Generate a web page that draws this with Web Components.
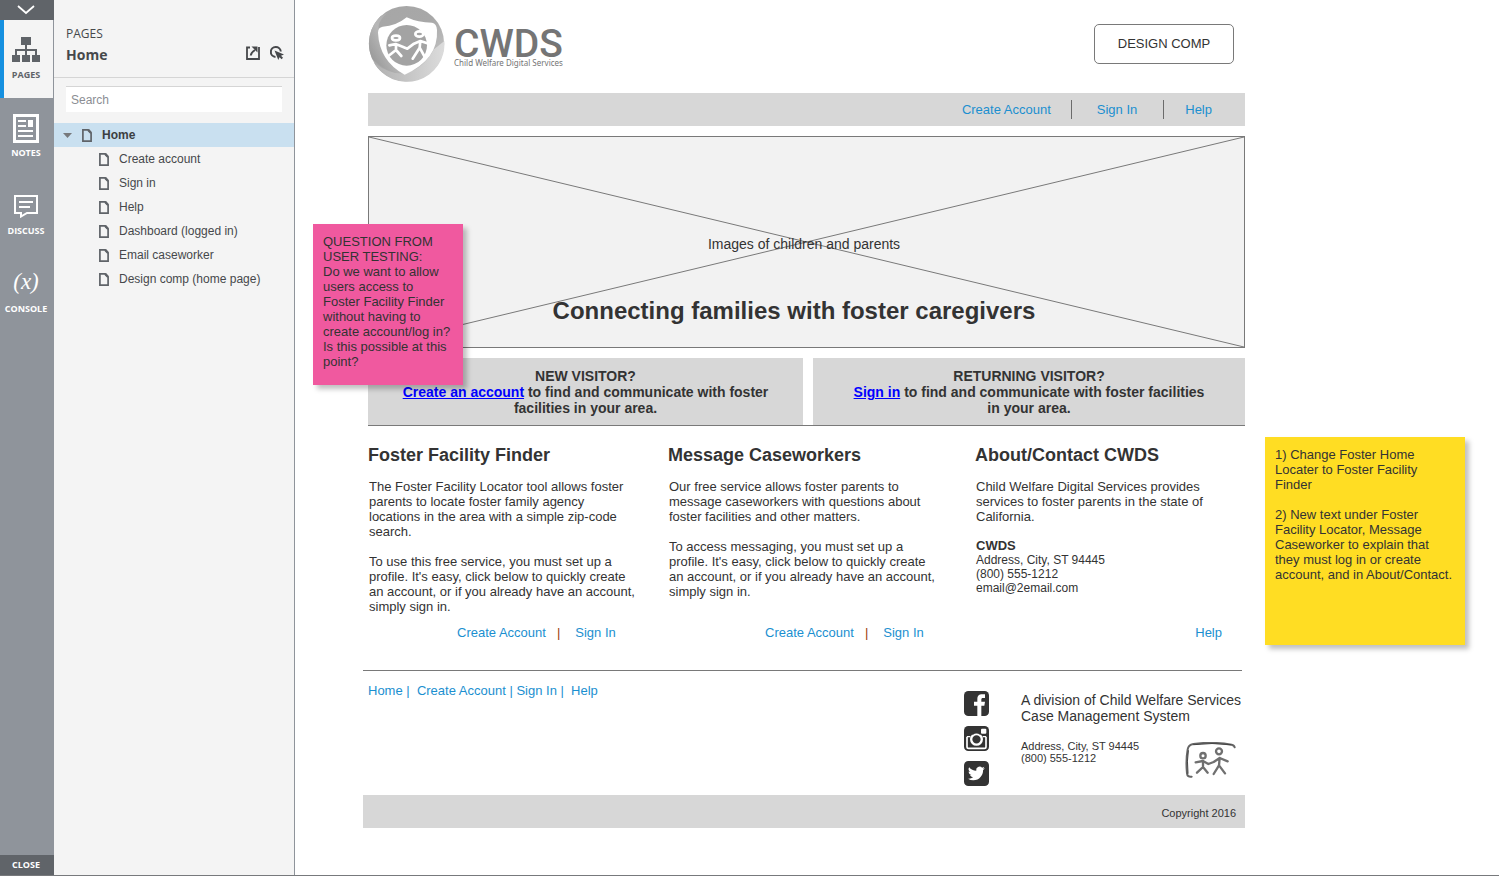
<!DOCTYPE html>
<html lang="en">
<head>
<meta charset="utf-8">
<title>Home</title>
<style>
  html, body { margin: 0; }
  body { font: 13px/15px "Liberation Sans", Arial, sans-serif; color: #333; background: #fff; }
</style>
</head>
<body>
<player-shell>
  <side-rail slot="rail"></side-rail>
  <pages-panel slot="panel"></pages-panel>
  <home-page></home-page>
</player-shell>

<script>
const define = (name, css, html) => {
  const tpl = document.createElement('template');
  tpl.innerHTML = `<style>*{box-sizing:border-box}${css}</style>${html}`;
  customElements.define(name, class extends HTMLElement {
    constructor() {
      super();
      this.attachShadow({ mode: 'open' }).append(tpl.content.cloneNode(true));
    }
  });
};

/* ---------- player frame ---------- */
define('player-shell', `
  :host { display: flex; box-sizing: border-box; min-height: 100vh; border-bottom: 1px solid #77797c; }
  .rail, .panel { display: flex; flex: none; }
  main { flex: 1; min-width: 0; }
`, `
  <div class="rail"><slot name="rail"></slot></div>
  <div class="panel"><slot name="panel"></slot></div>
  <main><slot></slot></main>
`);

define('rail-tab', `
  :host { display: block; color: #fff; }
  :host([active]) { color: #5f6368; }
  button { display: flex; flex-direction: column; align-items: center; gap: 4px; width: 100%; height: 78px;
    padding: 15px 2px 0 0; border: 0; background: none; color: inherit; font: 700 9px/12px "Open Sans", sans-serif; }
  :host([active]) button { width: 53px; padding: 14px 5px 0 0; border-left: 4px solid #1590e0; background: #f4f4f4; gap: 5px; }
  .icon { display: flex; height: 30px; align-items: center; justify-content: center; }
`, `
  <button type="button"><span class="icon"><slot name="icon"></slot></span><span><slot></slot></span></button>
`);

define('side-rail', `
  :host { display: flex; flex-direction: column; width: 54px; background: #8f949b; }
  .edge { display: flex; align-items: center; justify-content: center; width: 100%; height: 20px; padding: 0 2px 0 0;
    border: 0; background: #606469; color: #fff; font: 700 9px/12px "Open Sans", sans-serif; }
  nav { flex: 1; }
  svg { display: block; }
  .fx { padding-bottom: 4px; font: italic 23px/26px "Liberation Serif", serif; }
`, `
  <button class="edge" type="button" aria-label="Collapse">
    <svg width="18" height="10" viewBox="0 0 18 10" fill="none" stroke="#fff" stroke-width="1.8"><path d="M1 1l8 7 8-7"/></svg>
  </button>
  <nav>
    <rail-tab active>
      <svg slot="icon" width="28" height="25" viewBox="0 0 28 25" fill="#5f6368">
        <path d="M9 0h10v8H9zM0 18h8v7H0zM10 18h8v7h-8zM20 18h8v7h-8z"/>
        <path d="M14 8v10M4 18v-5h20v5" fill="none" stroke="#5f6368" stroke-width="2"/>
      </svg>PAGES</rail-tab>
    <rail-tab>
      <svg slot="icon" width="26" height="29" viewBox="0 0 26 29">
        <rect x="1.500" y="1.500" width="23" height="26" fill="none" stroke="#fff" stroke-width="3"/>
        <path d="M5 7h8M5 12h8M5 17h15M5 22h15" stroke="#fff" stroke-width="2"/>
        <path d="M15 6h5v7h-5z" fill="#fff"/>
      </svg>NOTES</rail-tab>
    <rail-tab>
      <svg slot="icon" width="24" height="23" viewBox="0 0 24 23" fill="none" stroke="#fff" stroke-width="2">
        <path d="M1 1h22v17H13l-6 3.500V18H1z"/><path d="M5 7h14M5 12h11"/>
      </svg>DISCUSS</rail-tab>
    <rail-tab><span slot="icon" class="fx">(x)</span>CONSOLE</rail-tab>
  </nav>
  <button class="edge" type="button">CLOSE</button>
`);

define('page-item', `
  :host { display: block; }
  a { display: flex; align-items: center; height: 24px; padding: 1px 0 0 45px; color: #46484b; font-size: 12px; text-decoration: none; }
  .page { margin-right: 10px; }
  .arrow { display: none; margin-right: 10px; }
  :host([selected]) a { padding-left: 9px; background: #c9e0f0; color: #3c3f42; font-weight: 700; }
  :host([selected]) .arrow { display: block; }
`, `
  <a href="#">
    <svg class="arrow" width="9" height="5" viewBox="0 0 9 5"><path d="M0 0h9L4.500 5z" fill="#77797c"/></svg>
    <svg class="page" width="10" height="13" viewBox="0 0 10 13" fill="none" stroke="#5f6368" stroke-width="1.700"><path d="M.9.9h5.300L9.100 4v8.100H.9z"/><path d="M6.200 .9L9.100 4" stroke-width="2.400"/></svg>
    <slot></slot>
  </a>
`);

define('pages-panel', `
  :host { display: block; box-sizing: border-box; width: 241px; background: #f4f4f4; border-right: 1px solid #8f949b; color: #46484b; }
  header { display: flex; justify-content: space-between; align-items: flex-end; height: 78px; padding: 0 10px 11px 12px;
    border-bottom: 1px solid #d5d5d5; font-family: "Open Sans", sans-serif; }
  p, h1 { margin: 0; }
  p { font-size: 12px; line-height: 20px; }
  h1 { font-size: 14px; line-height: 22px; font-weight: 700; }
  .tools { display: flex; gap: 10px; padding-bottom: 6px; }
  .tools button { display: block; padding: 0; border: 0; background: none; }
  svg { display: block; }
  .search { padding: 8px 12px 11px; }
  input { display: block; width: 100%; height: 26px; padding: 0 5px; border: 0; border-top: 1px solid #d5d5d5; background: #fff;
    font: 12px "Liberation Sans", sans-serif; color: #333; }
  input::placeholder { color: #8b8e93; }
`, `
  <header>
    <div><p>PAGES</p><h1>Home</h1></div>
    <div class="tools">
      <button type="button" aria-label="Open without sidebar">
        <svg width="14" height="14" viewBox="0 0 14 14" fill="none" stroke="#46484b" stroke-width="2"><path d="M4 1.500H1V13h12V1" stroke-width="1.800"/><path d="M4.800 9.500C5 7 6.500 5.500 9 4"/><path d="M5.500 .5H11.500V6.500z" fill="#46484b" stroke="none"/></svg>
      </button>
      <button type="button" aria-label="Highlight interactive elements">
        <svg width="14" height="14" viewBox="0 0 14 14"><path d="M5.500 11A5 5 0 1 1 10.800 5.500" fill="none" stroke="#46484b" stroke-width="2"/><path d="M4.500 4.500L14 8.500l-3 1.200 2 2.100-1.400 1.400-2.100-2-1.200 2.800z" fill="#46484b"/></svg>
      </button>
    </div>
  </header>
  <div class="search"><input type="search" placeholder="Search" aria-label="Search pages"></div>
  <nav>
    <page-item selected>Home</page-item>
    <page-item>Create account</page-item>
    <page-item>Sign in</page-item>
    <page-item>Help</page-item>
    <page-item>Dashboard (logged in)</page-item>
    <page-item>Email caseworker</page-item>
    <page-item>Design comp (home page)</page-item>
  </nav>
`);

/* ---------- prototype page ---------- */
define('cwds-logo', `
  :host { display: flex; gap: 9px; }
  svg { display: block; flex: none; }
  .words { padding-top: 21px; color: #757575; }
  strong, small { display: block; white-space: nowrap; }
  strong { font: 500 39px/34px Roboto, sans-serif; }
  small { margin-top: -2px; font: 8px/8px "Noto Sans", sans-serif; }
`, `
  <svg width="77" height="77" viewBox="0 0 231 231" role="img" aria-label="CWDS emblem">
    <defs>
      <linearGradient id="a" x1="0" y1="1" x2="1" y2="0"><stop offset="0" stop-color="#8c8c8c"/><stop offset=".5" stop-color="#b8b8b8"/><stop offset="1" stop-color="#a0a0a0"/></linearGradient>
      <linearGradient id="b" x1="0" y1="0" x2="1" y2="0"><stop offset="0" stop-color="#b0b0b0"/><stop offset="1" stop-color="#dcdcdc"/></linearGradient>
      <linearGradient id="c" x1="0" y1="0" x2="1" y2="1"><stop offset="0" stop-color="#a6a6a6"/><stop offset=".5" stop-color="#a8a8a8"/><stop offset="1" stop-color="#cfcfcf"/></linearGradient>
    </defs>
    <circle cx="115.500" cy="113" r="113" fill="url(#c)"/>
    <path d="M38 30A113 113 0 0 0 14 160Q60 205 106 204L34 110 32 60Q34 40 60 20Z" fill="url(#a)"/>
    <path d="M18 170Q70 208 112 202 165 190 198 130L229 105A113 113 0 0 1 18 170Z" fill="url(#b)"/>
    <path d="M116 34Q150 50 192 50 206 52 207 72 212 160 110 206 34 165 30 80 30 64 44 62 85 60 116 34Z" fill="#fff"/>
    <circle cx="116" cy="118" r="61" fill="#a3a3a3"/>
    <g fill="none" stroke="#fff" stroke-width="8" stroke-linejoin="round" stroke-linecap="round">
      <ellipse cx="84" cy="96" rx="12" ry="7"/><ellipse cx="154" cy="84" rx="12" ry="8"/>
      <path d="M64 118L83 114 100 121 118 128 138 113 157 105 178 112M84 114L84 132 64 148M84 132L100 150M157 105L155 125 134 158M155 125L172 156"/>
    </g>
  </svg>
  <div class="words"><strong>CWDS</strong><small>Child Welfare Digital Services</small></div>
`);

define('top-nav', `
  :host { display: block; background: #d7d7d7; }
  ul { display: flex; justify-content: flex-end; margin: 0; padding: 7px 33px 7px 0; list-style: none; line-height: 19px; }
  li + li { margin-left: 20px; padding-left: 25px; border-left: 1px solid #6b6b6b; }
  li:last-child { margin-left: 26px; padding-left: 21px; }
  a { color: #1b8fd0; text-decoration: none; }
`, `
  <ul><li><a href="#">Create Account</a></li><li><a href="#">Sign In</a></li><li><a href="#">Help</a></li></ul>
`);

define('hero-image', `
  :host { display: grid; box-sizing: border-box; height: 212px; border: 1px solid #797979; background: #f2f2f2; text-align: center; }
  svg, .copy { grid-area: 1 / 1; }
  svg { width: 100%; height: 210px; }
  .copy { padding-top: 99px; }
  p, h1 { margin: 0; }
  p { padding-right: 5px; font-size: 14px; line-height: 16px; }
  h1 { margin-top: 45px; padding-right: 25px; font-size: 24px; line-height: 28px; }
`, `
  <svg viewBox="0 0 875 210" preserveAspectRatio="none" stroke="#797979" aria-hidden="true"><path d="M0 0L875 210M0 210L875 0" vector-effect="non-scaling-stroke"/></svg>
  <div class="copy"><p>Images of children and parents</p><h1>Connecting families with foster caregivers</h1></div>
`);

define('visitor-card', `
  :host { display: block; box-sizing: border-box; padding: 10px 20px 9px; background: #d7d7d7; text-align: center; font-weight: 700; font-size: 14px; line-height: 16px; }
  ::slotted(a) { color: #00f; text-decoration: underline; }
`, `
  <div><slot name="title"></slot></div><div><slot></slot></div>
`);

define('info-column', `
  :host { display: flex; flex-direction: column; }
  h2 { margin: 0 0 13px; font-size: 18px; line-height: 21px; }
  .copy { flex: 1; max-width: 271px; padding-left: 1px; }
  .links { display: flex; margin-top: 11px; padding-left: 89px; color: #1b8fd0; }
  :host([middle]) .links { padding-left: 97px; }
  :host([end]) .links { justify-content: flex-end; padding: 0 23px 0 0; }
  .copy ::slotted(p) { margin: 0 0 15px; }
  .copy ::slotted(p:last-of-type) { margin: 0; }
  .copy ::slotted(address) { margin-top: 15px; font-style: normal; font-size: 12px; line-height: 14px; }
`, `
  <h2><slot name="title"></slot></h2>
  <div class="copy"><slot></slot></div>
  <div class="links"><slot name="links"></slot></div>
`);

define('social-icons', `
  :host { display: flex; flex-direction: column; gap: 10px; }
  a, svg { display: block; }
`, `
  <a href="#" aria-label="Facebook"><svg width="25" height="25" viewBox="0 0 75 75"><rect width="75" height="75" rx="13" fill="#333"/><path d="M40 75V44H30V32h10v-8c0-10 6-14 14-14h9v11h-6c-4 0-5 2-5 5v6h11l-2 12h-9v31z" fill="#fff"/></svg></a>
  <a href="#" aria-label="Instagram"><svg width="25" height="25" viewBox="0 0 75 75"><rect width="75" height="75" rx="13" fill="#333"/><path d="M9 32V62q0 5 5 5h47q5 0 5-5V32" fill="none" stroke="#fff" stroke-width="5"/><path d="M9 32h10M56 32h10" stroke="#fff" stroke-width="4"/><circle cx="37.500" cy="40" r="16" fill="#333" stroke="#fff" stroke-width="7"/><path d="M24 24Q37 14 51 24" stroke="#333" stroke-width="7" fill="none"/><rect x="51" y="8" width="16" height="15" rx="3" fill="#fff"/></svg></a>
  <a href="#" aria-label="Twitter"><svg width="25" height="25" viewBox="0 0 75 75"><rect width="75" height="75" rx="13" fill="#333"/><path transform="translate(12 12) scale(2.100)" fill="#fff" d="M23.950 4.570a10 10 0 0 1-2.820.77 4.960 4.960 0 0 0 2.160-2.720c-.95.560-2 .960-3.130 1.180a4.920 4.920 0 0 0-8.380 4.480C7.690 8.100 4.070 6.130 1.640 3.160a4.920 4.920 0 0 0 1.520 6.570 4.900 4.900 0 0 1-2.230-.61v.06a4.920 4.920 0 0 0 3.950 4.830 5 5 0 0 1-2.210.08 4.940 4.940 0 0 0 4.600 3.420A9.870 9.870 0 0 1 0 19.540a14 14 0 0 0 7.550 2.210c9.050 0 14-7.500 14-13.980 0-.21 0-.42-.02-.63a9.940 9.940 0 0 0 2.460-2.550z"/></svg></a>
`);

define('site-footer', `
  :host { display: block; }
  .rule { height: 1px; margin-right: 3px; background: #797979; }
  .row { display: flex; justify-content: space-between; height: 124px; }
  nav { padding: 12px 0 0 5px; white-space: pre; color: #1b8fd0; }
  nav a { color: inherit; text-decoration: none; }
  .about { display: flex; gap: 32px; width: 281px; padding-top: 20px; }
  .division { flex: 1; padding-top: 1px; white-space: nowrap; font-size: 14px; line-height: 16px; }
  .contact { display: flex; justify-content: space-between; padding: 16px 9px 0 0; font-size: 11px; line-height: 12px; }
  svg { display: block; margin-top: 2px; }
  .copyright { padding: 11px 9px 7px 0; background: #d7d7d7; text-align: right; font-size: 11px; }
`, `
  <div class="rule"></div>
  <div class="row">
    <nav><a href="#">Home</a> |  <a href="#">Create Account</a> | <a href="#">Sign In</a> |  <a href="#">Help</a></nav>
    <div class="about">
      <social-icons></social-icons>
      <div class="division">A division of Child Welfare Services<br>Case Management System
        <div class="contact">
          <span>Address, City, ST 94445<br>(800) 555-1212</span>
          <svg width="51" height="36" viewBox="0 0 153 108" fill="none" stroke-linecap="round" stroke-linejoin="round" aria-hidden="true">
            <path d="M20 104Q7 106 6 94 2 55 8 22 10 9 25 6 80-2 140 8 148 10 149 16" stroke="#666" stroke-width="6"/>
            <path d="M26 8Q80 1 138 8M9 94Q5 55 10 26" stroke="#444" stroke-width="3"/>
            <g stroke="#707070" stroke-width="7"><circle cx="54" cy="41" r="8"/><circle cx="102" cy="28" r="9"/>
            <path d="M32 61L54 57 70 66 86 60 104 48 128 58M54 57L54 75 36 92M54 75L68 92M104 48L102 70 86 96M102 70L120 94"/></g>
          </svg>
        </div>
      </div>
    </div>
  </div>
  <div class="copyright">Copyright 2016</div>
`);

define('sticky-note', `
  :host { display: block; box-sizing: border-box; padding: 10px; box-shadow: 4px 4px 5px rgba(0,0,0,.25); }
  ::slotted(p) { margin: 0 0 15px; }
`, `<slot></slot>`);

define('home-page', `
  :host { display: block; padding: 0 254px 0 68px; }
  .page { position: relative; }
  .upper { padding-left: 5px; }
  header { display: flex; justify-content: space-between; align-items: flex-start; padding-top: 6px; margin-bottom: 10px; }
  header button { width: 140px; height: 40px; margin: 18px 11px 0 0; padding: 0 6px 2px; border: 1px solid #797979; border-radius: 5px;
    background: #fff; color: #333; font: 13px "Liberation Sans", sans-serif; }
  hero-image { margin: 10px 0; }
  .visitors { display: grid; grid-template-columns: 435fr 432fr; gap: 10px; border-bottom: 1px solid #797979; }
  .columns { display: grid; grid-template-columns: 300fr 307fr 270fr; padding-top: 19px; margin-bottom: 30px; }
  info-column a { color: #1b8fd0; text-decoration: none; }
  info-column i { margin: 0 15px 0 11px; color: #a0410d; font-style: normal; }
  address b { font-size: 13px; }
  sticky-note { position: absolute; }
  .question { left: -50px; top: 224px; width: 150px; height: 161px; background: #f0599f; }
  .changes { left: calc(100% + 20px); top: 437px; width: 200px; height: 208px; background: #ffdd23; }
`, `
  <div class="page">
    <div class="upper">
      <header><cwds-logo></cwds-logo><button type="button">DESIGN COMP</button></header>
      <top-nav></top-nav>
      <hero-image></hero-image>
      <div class="visitors">
        <visitor-card><span slot="title">NEW VISITOR?</span><a href="#">Create an account</a> to find and communicate with foster facilities in your area.</visitor-card>
        <visitor-card><span slot="title">RETURNING VISITOR?</span><a href="#">Sign in</a> to find and communicate with foster facilities in&nbsp;your&nbsp;area.</visitor-card>
      </div>
      <div class="columns">
        <info-column>
          <span slot="title">Foster Facility Finder</span>
          <p>The Foster Facility Locator tool allows foster parents to locate foster family agency locations in the area with a simple zip-code search.</p>
          <p>To use this free service, you must set up a profile. It's easy, click below to quickly create an account, or if you already have an account, simply sign in.</p>
          <a slot="links" href="#">Create Account</a><i slot="links">|</i><a slot="links" href="#">Sign In</a>
        </info-column>
        <info-column middle>
          <span slot="title">Message Caseworkers</span>
          <p>Our free service allows foster parents to message caseworkers with questions about foster facilities and other matters.</p>
          <p>To access messaging, you must set up a profile. It's easy, click below to quickly create an account, or if you already have an account, simply sign in.</p>
          <a slot="links" href="#">Create Account</a><i slot="links">|</i><a slot="links" href="#">Sign In</a>
        </info-column>
        <info-column end>
          <span slot="title">About/Contact CWDS</span>
          <p>Child Welfare Digital Services provides services to foster parents in the state of California.</p>
          <address><b>CWDS</b><br>Address, City, ST 94445<br>(800) 555-1212<br>email@2email.com</address>
          <a slot="links" href="#">Help</a>
        </info-column>
      </div>
    </div>
    <site-footer></site-footer>
    <sticky-note class="question">QUESTION FROM USER TESTING:<br>Do we want to allow users access to Foster Facility Finder without having to create account/log in? Is this possible at this point?</sticky-note>
    <sticky-note class="changes"><p>1) Change Foster Home Locater to Foster Facility Finder</p><p>2) New text under Foster Facility Locator, Message Caseworker to explain that they must log in or create account, and in About/Contact.</p></sticky-note>
  </div>
`);
</script>
</body>
</html>
